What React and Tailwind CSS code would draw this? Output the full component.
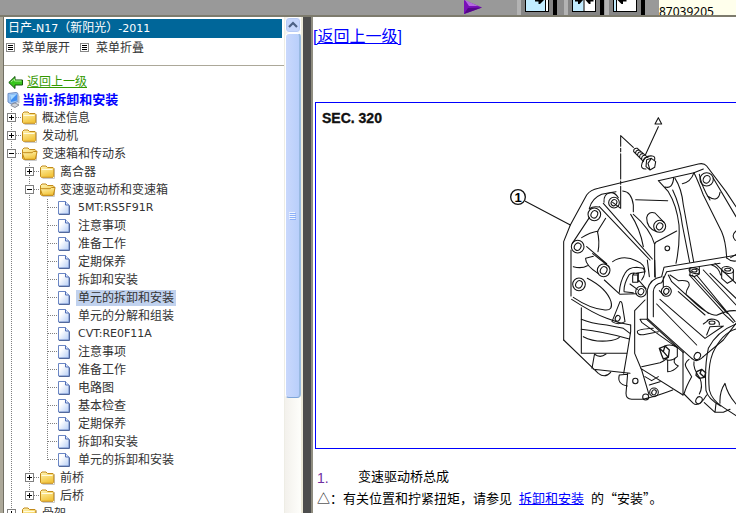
import { useState } from 'react'

const MENU = [
  { label: '概述信息', children: [] },
  { label: '发动机', children: [] },
  {
    label: '变速箱和传动系',
    open: true,
    children: [
      { label: '离合器', children: [] },
      {
        label: '变速驱动桥和变速箱',
        open: true,
        children: [
          { label: '5MT:RS5F91R', latin: true },
          { label: '注意事项' },
          { label: '准备工作' },
          { label: '定期保养' },
          { label: '拆卸和安装' },
          { label: '单元的拆卸和安装', selected: true },
          { label: '单元的分解和组装' },
          { label: 'CVT:RE0F11A', latin: true },
          { label: '注意事项' },
          { label: '准备工作' },
          { label: '电路图' },
          { label: '基本检查' },
          { label: '定期保养' },
          { label: '拆卸和安装' },
          { label: '单元的拆卸和安装' },
        ],
      },
      { label: '前桥', children: [] },
      { label: '后桥', children: [] },
    ],
  },
  { label: '骨架', children: [] },
]

const dots = { stroke: '#808080', strokeDasharray: '1 1', fill: 'none' }

const FolderIcon = ({ open }) => (
  <svg className="h-[18px] w-[18px] shrink-0" viewBox="1 0 18 18">
    <defs>
      <linearGradient id="folder" x1="0" y1="0" x2="0.4" y2="1">
        <stop offset="0" stopColor="#fff6b8" />
        <stop offset="1" stopColor="#f3c53c" />
      </linearGradient>
    </defs>
    <path d="M3.5 15.5h12v-10" fill="none" stroke="#c9c9c9" />
    <path
      d="M1.5 13.5v-9l1.5-1.5h4l1.5 1.5h5.5l.8.8v8.2l-.8.8h-11.700z"
      fill="url(#folder)"
      stroke="#c28a1a"
    />
    {open ? (
      <path d="M3.500 14.300L1.500 8.500l.6-.8h9l1.300-1.200h3.700l-1.800 7.800z" fill="url(#folder)" stroke="#c28a1a" />
    ) : (
      <path d="M2.500 6.500h11" stroke="#fffbe0" />
    )}
  </svg>
)

const DocIcon = () => (
  <svg className="h-[18px] w-[18px] shrink-0" viewBox="0 0 18 18">
    <defs>
      <linearGradient id="doc" x1="0" y1="0" x2="1" y2="1">
        <stop offset="0.3" stopColor="#ffffff" />
        <stop offset="1" stopColor="#b4cdf6" />
      </linearGradient>
    </defs>
    <path d="M.5 2.500h7l3.500 3.500v9h-10.500z" fill="url(#doc)" stroke="#6a86c4" />
    <path d="M7.500 2.500v3.500h3.500" fill="#dfe9fb" stroke="#4f6db5" />
    <path d="M1 15.500h10.500v-9" fill="none" stroke="#52699c" />
  </svg>
)

const Joint = ({ last, expandable, open }) => (
  <svg className="h-[18px] w-[18px] shrink-0" viewBox="0 0 18 18">
    <path d={last ? 'M7.5 0v9' : 'M7.5 0v18'} {...dots} />
    <path d="M8 8.500h10" {...dots} />
    {expandable && (
      <>
        <rect x="3.500" y="4.500" width="8" height="8" fill="#fff" stroke="#808080" />
        <path d={open ? 'M5 8.5h5' : 'M5 8.5h5M7.5 6v5'} stroke="#000" />
      </>
    )}
  </svg>
)

const Rail = ({ line }) => (
  <svg className="h-[18px] w-[18px] shrink-0" viewBox="0 0 18 18">
    {line && <path d="M7.500 0v18" {...dots} />}
  </svg>
)

const TreeNode = ({ node, rails, last }) => {
  const [open, setOpen] = useState(Boolean(node.open))
  const isFolder = Boolean(node.children)

  return (
    <li>
      <div className="flex h-[18px] items-center whitespace-nowrap">
        {rails.map((line, i) => (
          <Rail key={i} line={line} />
        ))}
        {isFolder ? (
          <button type="button" aria-label={node.label} aria-expanded={open} onClick={() => setOpen(!open)}>
            <Joint last={last} expandable open={open} />
          </button>
        ) : (
          <Joint last={last} />
        )}
        {isFolder ? <FolderIcon open={open} /> : <DocIcon />}
        <a
          href="#"
          className={`h-4 px-0.5 leading-4 ${node.latin ? 'text-[11px]' : 'text-xs'} ${node.selected ? 'bg-[#c1d2ee]' : ''}`}
        >
          {node.label}
        </a>
      </div>
      {isFolder && open && (
        <ul>
          {node.children.map((child, i) => (
            <TreeNode key={i} node={child} rails={[...rails, !last]} last={i === node.children.length - 1} />
          ))}
        </ul>
      )}
    </li>
  )
}

const ToolButton = ({ label, children }) => (
  <button
    type="button"
    aria-label={label}
    className="h-4 w-10 shrink-0 border-r-4 border-l-4 border-r-black border-l-[#b3b3b3] bg-[#858585] px-1"
  >
    <svg className="h-4 w-6" viewBox="0 0 24 16">
      {children}
    </svg>
  </button>
)

const TopBar = () => (
  <header className="flex h-[17px] shrink-0 overflow-hidden border-b-2 border-[#7d7b6d] bg-[#999999] pl-[463px]">
    <button type="button" aria-label="播放" className="shrink-0">
      <svg className="h-4 w-5" viewBox="0 0 20 16">
        <path d="M1 0L19 7.500L1 14z" fill="#7a10b8" />
        <path d="M2 0L15 6L6 6z" fill="#b56be0" />
        <path d="M1 14L5 8L19 7.500z" fill="#54068a" />
      </svg>
    </button>
    <div className="ml-[34px] flex shrink-0">
      <ToolButton label="显示目录">
        <rect x="0.500" y="-4" width="23" height="15.500" fill="#c2ecff" stroke="#000" />
        <path d="M20.500 0v11" stroke="#000" />
        <path d="M21 0h2v11h-2z" fill="#fff" />
        <path d="M10 0h9l-4 4h-1.500v-2.500h-3.500z" fill="#000" />
      </ToolButton>
      <div className="w-[7px] bg-[#8c8c8c]" />
      <ToolButton label="左右平分">
        <rect x="0.500" y="-4" width="23" height="15.500" fill="#fff" stroke="#000" />
        <path d="M1 0h10.500v11H1z" fill="#c2ecff" />
        <path d="M12 0v11" stroke="#000" />
        <path d="M3 0h8l-3.500 4h-1.500v-2.500h-3zM21.500 0h-8l3.500 4h1.500v-2.500h3z" fill="#000" />
      </ToolButton>
      <div className="w-px" />
      <ToolButton label="隐藏目录">
        <rect x="0.500" y="-4" width="23" height="15.500" fill="#fff" stroke="#000" />
        <path d="M1 0h2v11H1z" fill="#c2ecff" />
        <path d="M3.500 0v11" stroke="#000" />
        <path d="M4.500 0h9v1.500h-3.500v2.500h-1.500z" fill="#000" />
      </ToolButton>
    </div>
    <div className="ml-3.5 flex-1 bg-[#ffffec] pt-1 font-['Noto_Sans'] text-xs leading-4 text-black">87039205</div>
  </header>
)

const ListIcon = () => (
  <svg className="h-2.5 w-2.5 shrink-0" viewBox="0 0 10 10">
    <rect x="0.500" y="0.500" width="8" height="8" fill="#fff" stroke="#888" />
    <path d="M2 2.500h5M2 4.500h5M2 6.500h5" stroke="#000" />
  </svg>
)

const Scrollbar = () => (
  <div className="flex w-[17px] shrink-0 flex-col border-l border-[#eeede5] bg-linear-to-r from-[#f3f1ec] to-[#fefefb]">
    <button
      type="button"
      aria-label="向上滚动"
      className="flex h-4 items-center justify-center rounded-sm border border-white bg-[#c6d6fc] shadow-[0_0_0_1px_#b7caf5_inset]"
    >
      <svg className="h-2 w-3" viewBox="0 0 12 8">
        <path d="M2 6l4-4 4 4" fill="none" stroke="#4d6185" strokeWidth="2.200" />
      </svg>
    </button>
    <div className="flex flex-[363] items-center justify-center rounded-sm border border-r-2 border-white border-r-[#98b9e0] border-b-[#7ea5d8] bg-linear-to-r from-[#c9d8fc] to-[#b9cffb]">
      <svg className="h-2 w-2" viewBox="0 0 8 8">
        <path d="M0 .5h6M0 2.500h6M0 4.500h6M0 6.500h6" stroke="#eef4fe" />
        <path d="M1 1.500h6M1 3.500h6M1 5.500h6M1 7.500h6" stroke="#8cb0f8" />
      </svg>
    </div>
    <div className="flex-[115]" />
  </div>
)

const Sidebar = () => (
  <aside className="flex w-[303px] shrink-0 border-r-2 border-l-[3px] border-r-[#ece9d8] border-l-[#aca899] bg-white">
    <div className="min-w-0 flex-1 overflow-hidden border-l border-[#716f64]">
      <h1 className="mx-0.5 mt-0.5 h-[19px] bg-[#006699] pl-0.5 text-xs leading-[19px] whitespace-nowrap text-white">
        日产<span className="text-[11px]">-N17</span>（新阳光）<span className="text-[11px]">-2011</span>
      </h1>
      <div className="flex h-7 items-center gap-1.5 border-b border-[#aca899] pb-2 pl-0.5 text-xs text-[#333]">
        <ListIcon />
        <button type="button" className="mr-1">菜单展开</button>
        <ListIcon />
        <button type="button">菜单折叠</button>
      </div>
      <nav className="pt-[7px] text-[#333]">
        <a href="#" className="flex h-[18px] items-center gap-1 pl-1 text-xs leading-4 text-[#339900]">
          <svg className="h-3.5 w-[15px] shrink-0" viewBox="0 0 15 14">
            <path d="M.8 7.500L7 1.500v3.500h7.500v5H7v3.500z" fill="#37c51c" stroke="#14540c" />
            <path d="M3 7L6.500 4v2h7" fill="none" stroke="#a4f08a" />
          </svg>
          <span className="underline">返回上一级</span>
        </a>
        <div className="flex h-[18px] items-center pl-0.5 text-[13px] leading-4 font-bold text-[#0000ff]">
          <svg className="h-4 w-4 shrink-0" viewBox="0 0 16 16">
            <path d="M2 1.500L10 .5q2 0 2 2v7l-7 2.500-3-2z" fill="#9cc4f3" stroke="#6f8fc4" />
            <path d="M4 3l7-1v6.500L5 10z" fill="#3f8df0" />
            <path d="M4 3l7-1L5 8z" fill="#a8d8ff" />
            <path d="M6 12l3-1 4 2-4 2.500-4-2z" fill="#cfd3da" stroke="#8a8f9a" />
            <path d="M12 3l1.500 1v7l-2 1z" fill="#b9bec8" />
          </svg>
          当前:拆卸和安装
        </div>
        <ul>
          {MENU.map((node, i) => (
            <TreeNode key={node.label} node={node} rails={[]} last={i === MENU.length - 1} />
          ))}
        </ul>
      </nav>
    </div>
    <Scrollbar />
  </aside>
)

const Boss = ({ x, y, r = 18 }) => (
  <>
    <circle cx={x} cy={y} r={r} />
    <ellipse cx={x} cy={y} rx={r * 0.5} ry={r * 0.6} transform={`rotate(30 ${x} ${y})`} />
  </>
)

// Exploded view, drawn at three units to the pixel
const Transaxle = () => (
  <svg className="h-[345px] w-[420px] shrink-0" viewBox="-522 24 1260 1035" role="img" aria-label="SEC. 320">
    <text x="-504" y="85" fontSize="42" fontWeight="bold" fontFamily="Liberation Sans, sans-serif" fill="#111" stroke="#111" strokeWidth="1">
      SEC. 320
    </text>
    <text x="84" y="320" fontSize="39" fontWeight="bold" textAnchor="middle" fontFamily="Liberation Sans, sans-serif">
      1
    </text>
    <g fill="none" stroke="#141414" strokeWidth="3.200" strokeLinejoin="round" strokeLinecap="round">
      <path d="M505 68L495 87H515Z" />
      <circle cx="84" cy="306" r="22" strokeWidth="4" />
      <path d="M505 95L466 180M106 319L241 390" />
      <path d="M430 157L392 122V154M392 160V170M392 176V252M392 258V268M392 274V340L368 322" />
      {/* bolt */}
      <path d="M442 160L474 188M431 170L460 199M442 160Q430 158 431 170M448 165Q436 165 437 176M454 170Q442 170 443 182M460 176Q448 175 449 188M466 181Q454 180 455 194M472 187Q462 186 460 199" />
      <path d="M487 183Q496 184 494 194M487 183Q465 180 456 205Q450 222 468 222M470 194L484 190L497 200L494 217L480 225L468 215ZM484 190L474 205L480 225" />

      {/* bell housing */}
      <path d="M221 735V440L241 390L290 300Q302 284 325 280L625 207Q642 203 650 213L708 290L738 335" />
      <path d="M243 603V465M247 445L298 368M298 340Q306 310 335 298Q360 292 378 290M298 342Q308 333 326 336M398 288Q425 290 430 330V350" />
      <path d="M340 325L487 492M328 335L480 495M422 358Q450 400 460 455M430 358Q480 400 494 448L494 545M437 314L533 317M497 442L560 408M494 448L497 442" />
      <path d="M342 322Q340 295 362 293Q375 292 385 308M347 370L325 405M275 428Q300 412 325 408M322 408Q330 440 324 470" />
      <path d="M500 410Q470 400 470 368Q474 348 495 354L522 382M290 455L350 506M308 476L357 515M287 490Q285 510 325 536M250 515Q275 522 292 512M287 490L310 484" />
      <Boss x={372} y={323} r={16} />
      <Boss x={313} y={358} r={19} />
      <Boss x={263} y={455} r={19} />
      <Boss x={341} y={526} r={19} />
      <Boss x={650} y={253} r={20} />
      <Boss x={509} y={394} r={18} />
      <circle cx="532" cy="460" r="7" />
      <path d="M505 257L612 233L640 222M505 257L535 290Q560 330 567 390Q570 450 558 505M525 276Q548 283 551 248M555 250Q575 280 580 330L611 500M548 285Q570 330 577 390L599 502M577 266Q602 262 612 233" />
      <path d="M612 233Q625 260 640 300L695 410Q708 440 710 490M628 238Q635 275 660 315M652 303Q685 325 690 292M670 250L738 365M738 408Q722 422 736 436M712 490Q722 500 738 498M722 488L738 478" />
      <path d="M368 500Q400 478 440 498Q465 508 465 530L440 535" />

      <g transform="translate(0 495)">
        <path d="M221 240L325 340Q345 356 362 337M310 328L420 340M245 118Q310 160 350 175Q385 190 422 195M274 143V280H410" />
        <path d="M274 178Q300 190 350 195L400 205L420 220M274 208Q340 215 418 237M280 230Q310 246 350 243Q380 240 388 232M313 285L306 325M313 282Q330 296 348 282" />
        <path d="M292 55Q350 85 363 125Q370 152 345 150Q300 146 250 112M390 125Q395 122 397 135L405 185Q385 197 366 185Z" />
        <path d="M343 60L390 103L440 101M388 97Q390 65 405 40Q415 22 440 22L460 25Q470 38 455 60M402 92Q402 70 417 45Q425 35 445 42V65M402 95L430 98M428 45h15v22h-15zM428 45L432 40H446L443 45M420 72L442 88M447 62L468 86" />
        <Boss x={267} y={73} r={19} />
        <Boss x={453} y={95} r={16} />
        <Boss x={529} y={94} r={15} />
        <Boss x={492} y={397} r={13} />
        <ellipse cx="383" cy="175" rx="7" ry="9" transform="rotate(25 383 175)" />
        <circle cx="436" cy="363" r="8" />
        <circle cx="467" cy="411" r="9" />
        <path d="M422 195V215L413 270L401 340M472 0L478 50M494 0L496 52" />
        <path d="M465 120L434 152V280L455 330L477 404M413 340L408 400Q408 418 425 418H455Q480 415 548 390M388 345Q380 372 412 378M388 345L412 343M452 325L579 405M455 320L510 308Q530 300 535 288M465 350L485 362L505 350M478 375L510 365" />
        {/* gearbox case */}
        <path d="M472 175V90Q480 55 515 50L522 22L738 -14M490 170V95Q492 72 515 68M515 68L530 35L600 24L690 10M520 80V50" />
        <path d="M472 175L606 296M450 178H470L580 278M450 178L456 188L560 262M442 215Q442 208 490 205M442 215Q442 226 460 224L505 215M640 290L700 240L738 190" />
        <path d="M510 118L645 235L700 198M500 132L620 255M650 225L660 200L700 198M508 92L520 105" />
        <path d="M535 45L545 65L600 115Q650 165 680 166Q710 150 738 152M540 45L565 62Q602 58 597 78Q588 92 588 103M588 103L655 160M565 95L645 165" />
        <path d="M598 45L700 157M607 45L712 160M622 48L735 185M660 40L738 115M640 30L738 135M700 160L730 188M600 25V45L612 50L628 42V22" />
        <ellipse cx="613" cy="32" rx="16" ry="8" transform="rotate(15 613 32)" />
        <ellipse cx="613" cy="32" rx="8" ry="4" />
        <path d="M695 30V55L712 70L730 60V32M665 15Q685 20 692 45M675 10L738 70" />
        <ellipse cx="713" cy="30" rx="18" ry="10" transform="rotate(10 713 30)" />
        <ellipse cx="713" cy="29" rx="9" ry="4" />
        <path d="M650 185Q655 175 672 178Q690 182 688 195M650 185L640 192" />
        <ellipse cx="666" cy="188" rx="9" ry="5" />
        {/* extension and mounting ear */}
        <path d="M738 207Q695 220 668 280Q652 320 658 390Q665 420 700 442L738 467M738 192Q680 215 655 265Q643 320 648 392Q655 418 692 438M643 428L675 457H700L720 448M675 457L678 430M690 430Q688 395 705 370Q712 402 738 432" />
        <path d="M579 275V405M597 298Q580 310 590 325L605 350Q588 380 582 402L610 430Q622 440 640 420L650 405M606 296Q620 310 640 290M612 305Q608 325 630 355Q640 380 628 402" />
        <ellipse cx="622" cy="288" rx="9" ry="11" transform="rotate(30 622 288)" />
        <ellipse cx="627" cy="421" rx="9" ry="11" transform="rotate(30 627 421)" />
        <path strokeWidth="4" d="M508 265L525 258L538 270L535 292L520 297L515 285ZM525 258L520 275L535 292M508 265L520 275" />
        <path d="M525 258Q540 250 562 262V290Q545 305 530 299M533 300V335Q550 335 565 318Q545 308 556 294" />
        <path strokeWidth="4" d="M620 335L635 328L647 338L643 352L628 355L618 346ZM635 328L630 340L643 352" />
      </g>
    </g>
  </svg>
)

const Content = () => (
  <main className="min-w-0 flex-1 overflow-hidden border-l-2 border-[#8f8d80] bg-white">
    <a
      href="#"
      className="mt-2 block w-fit font-['Liberation_Sans','Noto_Sans_CJK_SC',sans-serif] text-base leading-6 text-[#0000ff] underline"
    >
      [返回上一级]
    </a>
    <figure className="mt-[53px] ml-0.5 flex overflow-hidden border border-r-0 border-[#0000ff]">
      <Transaxle />
    </figure>
    <div className="mt-4 ml-1 font-['Noto_Sans_CJK_SC',sans-serif] text-[13px] leading-[22px] whitespace-nowrap text-black">
      <div className="flex">
        <span className="w-[41px] font-['Liberation_Sans',sans-serif] text-sm leading-[26px] text-[#7030a0]">1.</span>
        <span>变速驱动桥总成</span>
      </div>
      <p className="-mt-1">
        △：有关位置和拧紧扭矩，请参见{' '}
        <a href="#" className="mx-1 text-[#0000ff] underline">拆卸和安装</a>
        {' '}的“安装”。
      </p>
    </div>
  </main>
)

export default function App() {
  return (
    <div lang="zh-CN" className="flex h-screen flex-col overflow-hidden bg-white font-['DejaVu_Sans','Noto_Sans_CJK_SC',sans-serif]">
      <TopBar />
      <div className="flex min-h-0 flex-1">
        <Sidebar />
        <div className="w-2 shrink-0 bg-[#4d4d4d]" />
        <Content />
      </div>
    </div>
  )
}
